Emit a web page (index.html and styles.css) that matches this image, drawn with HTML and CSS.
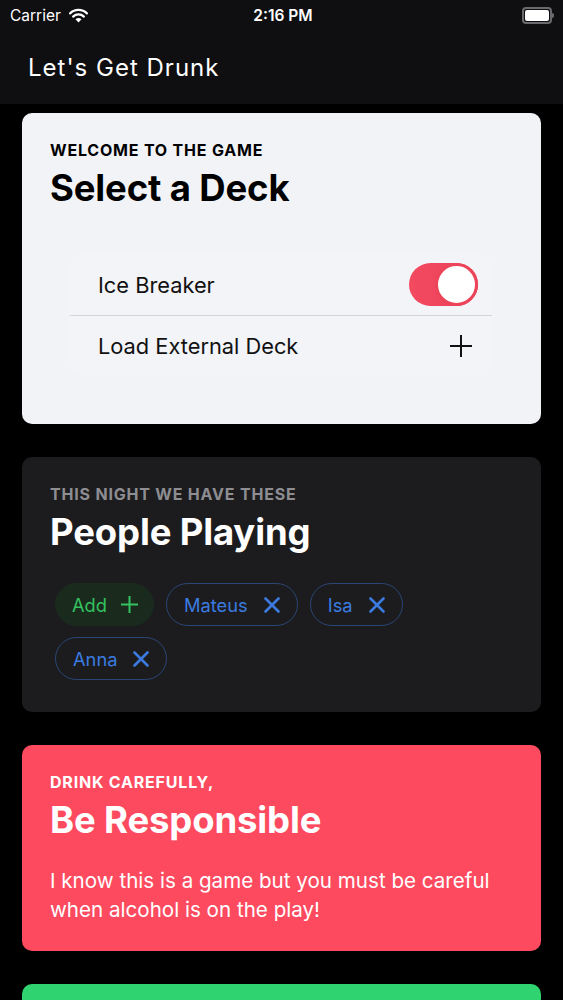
FILE: index.html
```html
<!DOCTYPE html>
<html lang="en">
<head>
    <meta charset="UTF-8">
    <meta name="viewport" content="width=device-width, initial-scale=1.0">
    <title>Let's Get Drunk</title>
    <link rel="stylesheet" href="styles.css">
</head>
<body>
<header class="topbar">
    <div class="status">
        <div class="status-left">
            <span>Carrier</span>
            <svg class="wifi" width="21" height="15" viewBox="0 0 20 15">
                <path d="M10 14.5 L13 11.2 A4.6 4.6 0 0 0 7 11.2 Z" fill="#fff"/>
                <path d="M4.6 8.6 A7.8 7.8 0 0 1 15.4 8.6" stroke="#fff" stroke-width="2.2" fill="none" stroke-linecap="round"/>
                <path d="M1.6 5.4 A12 12 0 0 1 18.4 5.4" stroke="#fff" stroke-width="2.2" fill="none" stroke-linecap="round"/>
            </svg>
        </div>
        <div class="status-time">2:16 PM</div>
        <div class="status-right">
            <div class="battery"><div class="battery-fill"></div></div>
            <div class="battery-nub"></div>
        </div>
    </div>
    <div class="nav-title">Let's Get Drunk</div>
</header>

<main class="cards">
    <!-- Decks -->
    <section class="card card-light">
        <div class="card-label">Welcome to the game</div>
        <h2 class="card-title">Select a Deck</h2>
        <div class="deck-list">
            <div class="deck-row">
                <span>Ice Breaker</span>
                <div class="toggle"><div class="knob"></div></div>
            </div>
            <div class="deck-row">
                <span>Load External Deck</span>
                <svg class="plus" width="22" height="22" viewBox="0 0 22 22">
                    <path d="M11 0 V22 M0 11 H22" stroke="#111" stroke-width="2"/>
                </svg>
            </div>
        </div>
    </section>

    <!-- Players -->
    <section class="card card-dark">
        <div class="card-label">This night we have these</div>
        <h2 class="card-title">People Playing</h2>
        <div class="chips">
            <div class="chip chip-add">Add
                <svg width="17" height="17" viewBox="0 0 17 17"><path d="M8.5 0 V17 M0 8.5 H17" stroke="#33c25f" stroke-width="2"/></svg>
            </div>
            <div class="chip">Mateus
                <svg width="16" height="16" viewBox="0 0 16 16"><path d="M1.5 1.5 L14.5 14.5 M14.5 1.5 L1.5 14.5" stroke="#3b7be0" stroke-width="2.6" stroke-linecap="round"/></svg>
            </div>
            <div class="chip">Isa
                <svg width="16" height="16" viewBox="0 0 16 16"><path d="M1.5 1.5 L14.5 14.5 M14.5 1.5 L1.5 14.5" stroke="#3b7be0" stroke-width="2.6" stroke-linecap="round"/></svg>
            </div>
            <div class="chip">Anna
                <svg width="16" height="16" viewBox="0 0 16 16"><path d="M1.5 1.5 L14.5 14.5 M14.5 1.5 L1.5 14.5" stroke="#3b7be0" stroke-width="2.6" stroke-linecap="round"/></svg>
            </div>
        </div>
    </section>

    <!-- Warning -->
    <section class="card card-red">
        <div class="card-label">Drink carefully,</div>
        <h2 class="card-title">Be Responsible</h2>
        <p class="card-text">I know this is a game but you must be careful when alcohol is on the play!</p>
    </section>

    <section class="card card-green"></section>
</main>
</body>
</html>
```

FILE: styles.css
```css
body {
    margin: 0;
    height: 1000px;
    background-color: #000;
    font-family: 'Inter', 'Noto Sans', sans-serif;
    color: white;
    overflow: hidden;
}
.topbar {
    background-color: #0f0e11;
    height: 104px;
}
.status {
    height: 30px;
    display: flex;
    align-items: center;
    justify-content: space-between;
    padding: 0 9px 0 10px;
    font-size: 15.5px;
}
.status-left {
    display: flex;
    align-items: center;
    gap: 7px;
    width: 120px;
}
.status-time {
    font-weight: 600;
    padding-left: 2px;
}
.status-right {
    width: 120px;
    display: flex;
    justify-content: flex-end;
    align-items: center;
}
.battery {
    width: 24px;
    height: 11px;
    border: 2px solid #6a6a6e;
    border-radius: 4px;
    padding: 1px;
}
.battery-fill {
    width: 100%;
    height: 100%;
    background: #fff;
    border-radius: 2px;
}
.battery-nub {
    width: 2px;
    height: 5px;
    background: #6a6a6e;
    border-radius: 0 2px 2px 0;
}
.nav-title {
    padding: 23px 0 0 28px;
    font-size: 24px;
    line-height: 29px;
    letter-spacing: 1px;
}
.cards {
    display: flex;
    flex-direction: column;
    gap: 33px;
    padding: 9px 22px 0 22px;
}
.card {
    border-radius: 10px;
    padding: 28px 28px 28px 28px;
}
.card-label {
    font-size: 16px;
    line-height: 19px;
    font-weight: 700;
    letter-spacing: 0.8px;
    text-transform: uppercase;
}
.card-title {
    margin: 6px 0 0 0;
    font-size: 36.5px;
    line-height: 44px;
    font-weight: 700;
    letter-spacing: -0.15px;
}
.card-light {
    background-color: #f2f3f7;
    color: #000;
    padding-bottom: 48px;
}
.deck-list {
    margin: 44px 21px 0 20px;
    background-color: #f3f4f8;
    border-radius: 10px;
    box-shadow: 0 0 1px rgba(0, 0, 0, 0.03);
}
.deck-row {
    display: flex;
    align-items: center;
    justify-content: space-between;
    height: 61px;
    padding: 0 14px 0 28px;
    font-size: 21.8px;
    color: #111;
}
.deck-row + .deck-row {
    height: 60px;
    border-top: 1px solid #d6d6da;
}
.toggle {
    width: 69px;
    height: 43px;
    border-radius: 22px;
    background: linear-gradient(90deg, #f44a60, #e8405a);
    display: flex;
    justify-content: flex-end;
}
.knob {
    width: 37px;
    height: 37px;
    border-radius: 50%;
    background: #fff;
    border: 3px solid #ec4459;
}
.plus {
    margin-right: 6px;
}
.card-dark {
    background-color: #1c1c1e;
    padding-bottom: 32px;
}
.card-dark .card-label {
    color: #8d8d92;
}
.chips {
    display: flex;
    flex-wrap: wrap;
    gap: 11px 12px;
    margin: 29px 0 0 5px;
}
.chip {
    display: flex;
    align-items: center;
    gap: 16px;
    height: 41px;
    padding: 0 17px 0 17px;
    border: 1px solid #2a4677;
    border-radius: 22px;
    font-size: 18.3px;
    color: #3b7be0;
}
.chip-add {
    background-color: #1a2b1e;
    border-color: #1a2b1e;
    gap: 14px;
    padding: 0 15px 0 16px;
    color: #33c25f;
}
.card-red {
    background-color: #fe4a5f;
    padding-bottom: 27px;
}
.card-text {
    margin: 24px 0 0 0;
    font-size: 20.6px;
    line-height: 29px;
}
.card-green {
    background-color: #2fd36f;
    height: 40px;
}
```
